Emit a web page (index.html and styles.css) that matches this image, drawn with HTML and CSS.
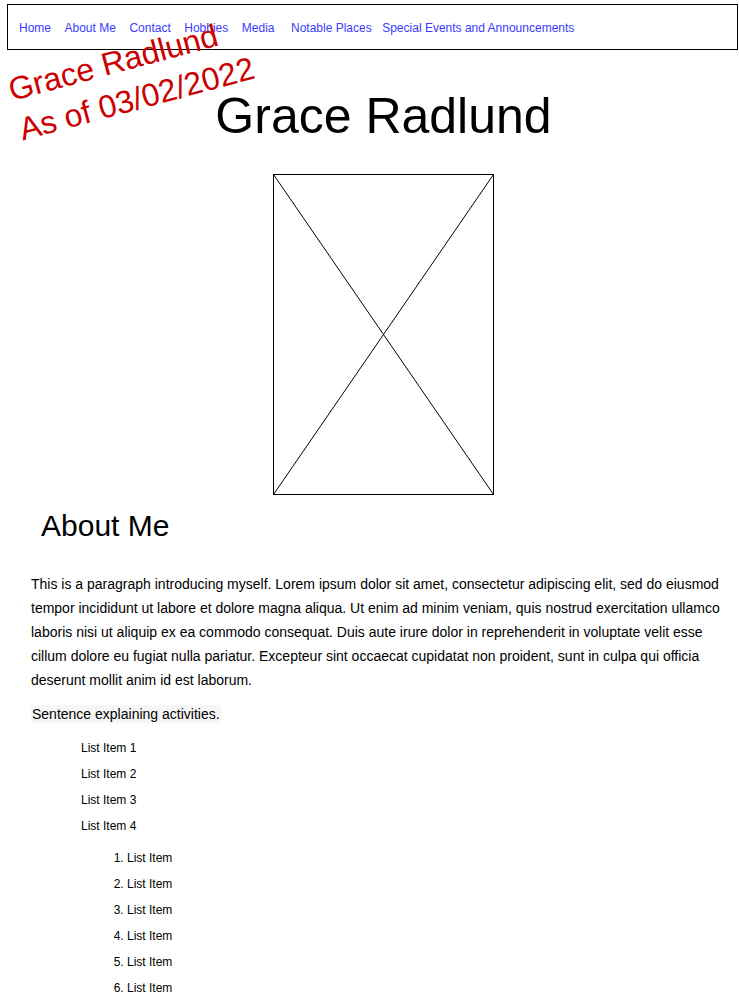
FILE: index.html
```html
<!DOCTYPE html>
<html lang="en">
<head>
<meta charset="utf-8">
<title>Grace Radlund</title>
<link rel="stylesheet" href="styles.css">
</head>
<body>
<nav class="topnav">
  <a href="#">Home</a>
  <a href="#">About Me</a>
  <a href="#">Contact</a>
  <a href="#">Hobbies</a>
  <a href="#" class="nav-media">Media</a>
  <a href="#" class="nav-notable">Notable Places</a>
  <a href="#">Special Events and Announcements</a>
</nav>
<div class="stamp">Grace Radlund<br>As of 03/02/2022</div>
<header class="hero">
  <h1 class="title">Grace Radlund</h1>
  <svg class="photo" width="221" height="321" viewBox="0 0 221 321" aria-label="Photo placeholder">
    <rect x="0.5" y="0.5" width="220" height="320" fill="#fff" stroke="#000" stroke-width="1"/>
    <line x1="0.5" y1="0.5" x2="220.5" y2="320.5" stroke="#000" stroke-width="1"/>
    <line x1="220.5" y1="0.5" x2="0.5" y2="320.5" stroke="#000" stroke-width="1"/>
  </svg>
</header>
<main class="about">
  <h2 class="about-title">About Me</h2>
  <p class="intro">This is a paragraph introducing myself. Lorem ipsum dolor sit amet, consectetur adipiscing elit, sed do eiusmod tempor incididunt ut labore et dolore magna aliqua. Ut enim ad minim veniam, quis nostrud exercitation ullamco laboris nisi ut aliquip ex ea commodo consequat. Duis aute irure dolor in reprehenderit in voluptate velit esse cillum dolore eu fugiat nulla pariatur. Excepteur sint occaecat cupidatat non proident, sunt in culpa qui officia deserunt mollit anim id est laborum.</p>
  <p class="activities"><span class="activities-text">Sentence explaining activities.</span></p>
  <ul class="plain-list">
    <li>List Item 1</li>
    <li>List Item 2</li>
    <li>List Item 3</li>
    <li>List Item 4</li>
  </ul>
  <ol class="num-list">
    <li>List Item</li>
    <li>List Item</li>
    <li>List Item</li>
    <li>List Item</li>
    <li>List Item</li>
    <li>List Item</li>
  </ol>
</main>
</body>
</html>
```

FILE: styles.css
```css
html, body {
  margin: 0;
  padding: 0;
  background: #fff;
}
body {
  font-family: "Liberation Sans", Arial, Helvetica, sans-serif;
  color: #000;
  position: relative;
}

.topnav {
  display: flex;
  align-items: center;
  gap: 13.5px;
  height: 42px;
  margin: 4px 1px 0 7px;
  padding: 2px 11px 0;
  border: 1px solid #000;
  font-size: 12px;
}
.topnav a {
  color: #3a3aff;
  text-decoration: none;
  white-space: nowrap;
}
.topnav .nav-media { margin-right: 3px; }
.topnav .nav-notable { margin-right: -3px; }

.stamp {
  position: absolute;
  left: 4px;
  top: 71px;
  transform: rotate(-15deg);
  transform-origin: 0 0;
  color: #cc0000;
  font-size: 32px;
  line-height: 41px;
  white-space: nowrap;
}

.hero {
  display: flex;
  flex-direction: column;
  align-items: center;
  padding-left: 28px;
}
.title {
  margin: 37px 0 29px;
  font-size: 50px;
  line-height: 58px;
  font-weight: normal;
}
.photo {
  display: block;
}

.about {
  padding: 0 8px 0 31px;
}
.about-title {
  margin: 13px 0 29px 10px;
  font-size: 30px;
  line-height: 35px;
  font-weight: normal;
}
.intro {
  margin: 0;
  font-size: 14px;
  line-height: 24px;
}
.activities {
  margin: 13px 0 12px;
  font-size: 14px;
  line-height: 18px;
}
.activities-text {
  display: inline-block;
  padding: 0 1px;
  background: #f6f6f6;
}
.plain-list {
  list-style: none;
  margin: 0 0 6px;
  padding-left: 50px;
  font-size: 12px;
  line-height: 26px;
}
.num-list {
  margin: 0;
  padding-left: 96px;
  font-size: 12px;
  line-height: 26px;
}
```
